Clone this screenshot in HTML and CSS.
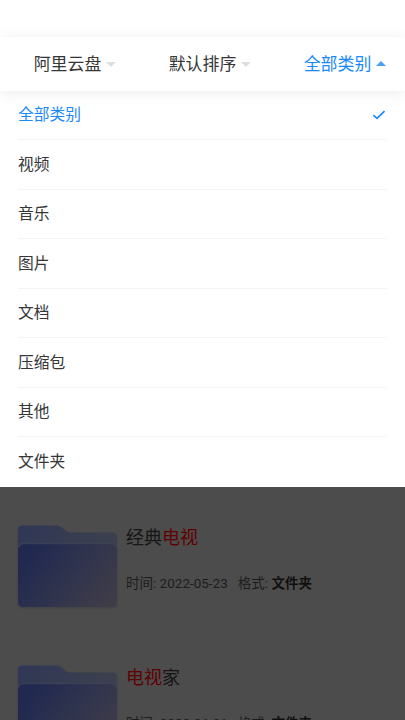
FILE: index.html
```
<!DOCTYPE html>
<html lang="zh-CN">
<head>
<meta charset="utf-8">
<title>阿里云盘</title>
<link rel="stylesheet" href="styles.css">
</head>
<body>
<svg class="defs" width="0" height="0" aria-hidden="true">
  <defs>
    <linearGradient id="back" x1="0" y1="0" x2="1" y2="0.3"><stop offset="0" stop-color="#303756"/><stop offset="1" stop-color="#3d414d"/></linearGradient>
    <linearGradient id="front" x1="0" y1="0.25" x2="1" y2="0.75"><stop offset="0.08" stop-color="#222950"/><stop offset="0.55" stop-color="#30344d"/><stop offset="1" stop-color="#3f3c48"/></linearGradient>
    <symbol id="folder" viewBox="0 0 99 84">
      <path fill="url(#back)" d="M5 0.500H37c4 0 6 1.500 8 3 3 2.500 4 4 8 4H94q5 0 5 5V77q0 5-5 5H5q-5 0-5-5V5.500q0-5 5-5z"/>
      <rect y="18.500" width="99" height="63.500" rx="5" fill="url(#front)"/>
      <path d="M0.500 22.500q.5-4 5-4H93.500q4.500 0 5 4" fill="none" stroke="#414658" stroke-width="1.500" opacity=".7"/>
    </symbol>
  </defs>
</svg>
<div class="screen">
  <div class="top"></div>
  <nav class="tabs">
    <div class="tab"><span>阿里云盘</span><i class="caret"></i></div>
    <div class="tab"><span>默认排序</span><i class="caret"></i></div>
    <div class="tab active"><span>全部类别</span><i class="caret"></i></div>
  </nav>
  <ul class="menu">
    <li class="active"><span>全部类别</span><svg class="check" viewBox="0 0 14 10"><path d="M1.300 5.200L5 8.300L12.500 1.200" fill="none" stroke="#1989fa" stroke-width="1.700"/></svg></li>
    <li>视频</li>
    <li>音乐</li>
    <li>图片</li>
    <li>文档</li>
    <li>压缩包</li>
    <li>其他</li>
    <li>文件夹</li>
  </ul>
  <main class="results">
    <article class="item">
      <svg class="folder"><use href="#folder"/></svg>
      <div class="info">
        <h2>经典<em>电视</em></h2>
        <p><span>时间: 2022-05-23</span><span>格式: <b>文件夹</b></span></p>
      </div>
    </article>
    <article class="item">
      <svg class="folder"><use href="#folder"/></svg>
      <div class="info">
        <h2><em>电视</em>家</h2>
        <p><span>时间: 2022-06-21</span><span>格式: <b>文件夹</b></span></p>
      </div>
    </article>
  </main>
</div>
</body>
</html>
```
FILE: styles.css
```
* { box-sizing: border-box; }
body {
  margin: 0;
  background: #4c4c4c;
  color: #363637;
  font-family: Roboto, "Noto Sans CJK SC", sans-serif;
}
.defs { display: block; }
.screen {
  display: flex;
  flex-direction: column;
  height: 720px;
  overflow: hidden;
}
.top { flex: none; height: 37px; background: #fff; }
.tabs {
  position: relative;
  z-index: 1;
  flex: none;
  display: grid;
  grid-template-columns: repeat(3, 1fr);
  height: 54px;
  background: #fff;
  box-shadow: 0 2px 12px rgba(100, 101, 102, 0.12);
}
.tab {
  display: flex;
  align-items: center;
  justify-content: center;
  gap: 5px;
  padding: 0 0 1px 15px;
  font-size: 16.900px;
  line-height: 24px;
}
.caret {
  width: 0;
  height: 0;
  margin-top: 1px;
  border: 5px solid transparent;
  border-top: 5px solid #dcdee0;
  border-bottom: 0;
}
.active { color: #1989fa; }
.tab.active .caret {
  margin-top: 0;
  border-top: 0;
  border-bottom: 5px solid #479ff8;
}
.menu {
  flex: none;
  height: 396.500px;
  margin: -0.500px 0 0;
  padding: 0 18px;
  list-style: none;
  background: #fff;
}
.menu li {
  display: flex;
  align-items: center;
  justify-content: space-between;
  height: 49.500px;
  padding-top: 0.500px;
  border-bottom: 1px solid #f3f4f5;
  font-size: 15.750px;
  line-height: 24px;
}
.menu li:last-child { border-bottom-color: transparent; }
.check { width: 14px; height: 10px; margin: 0 1px 0 0; }
.results { flex: 1; padding-top: 20px; }
.item {
  display: flex;
  gap: 9px;
  height: 139.500px;
  padding: 18px 18px 0;
  border-top: 1px solid #4a4a4a;
}
.folder {
  flex: none;
  width: 99px;
  height: 84px;
  margin-top: -1px;
  filter: drop-shadow(0 1px 1px #414248);
}
.info h2 {
  margin: 0;
  color: #151515;
  font-size: 18px;
  font-weight: 400;
  line-height: 24px;
}
.info em { color: #600000; font-style: normal; }
.info p {
  display: flex;
  gap: 10px;
  margin: 23px 0 0;
  color: #1c1c1c;
  font-size: 13.500px;
  line-height: 20px;
}
.info b { color: #101010; }
```
